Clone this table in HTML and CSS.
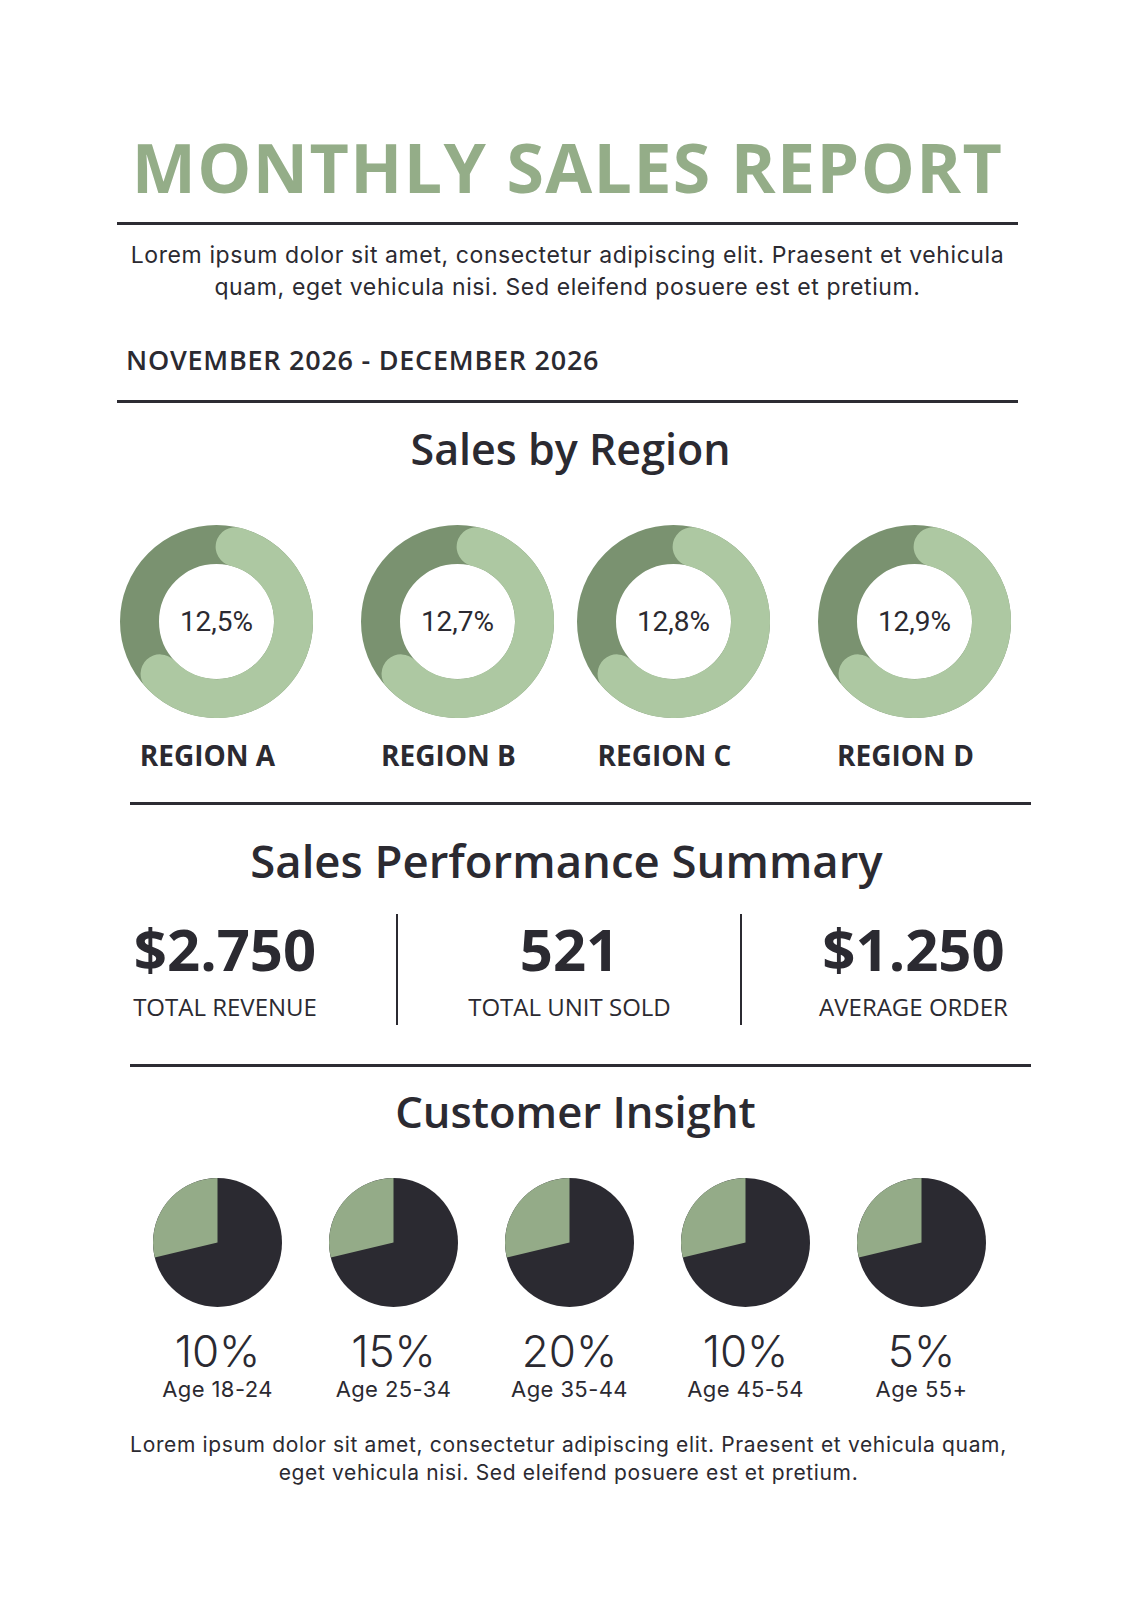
FILE: index.html
```html
<!DOCTYPE html>
<html lang="en">
<head>
<meta charset="utf-8">
<title>Monthly Sales Report</title>
<link rel="stylesheet" href="styles.css">
</head>
<body>
<main class="page">
  <header class="hero">
    <h1 class="title">MONTHLY SALES REPORT</h1>
    <hr class="rule rule-wide rule-title">
    <p class="intro">Lorem ipsum dolor sit amet, consectetur adipiscing elit. Praesent et vehicula<br>quam, eget vehicula nisi. Sed eleifend posuere est et pretium.</p>
    <p class="period">NOVEMBER 2026 - DECEMBER 2026</p>
    <hr class="rule rule-wide rule-period">
  </header>

  <section class="regions">
    <h2 class="heading heading-region">Sales by Region</h2>
    <div class="donut-row">
      <div class="donut-pair">
        <figure class="region">
          <div class="donut">
            <svg class="donut-svg" viewBox="0 0 193 193"><circle class="ring-base" cx="96.5" cy="96.5" r="77"/><circle class="ring-arc" cx="96.5" cy="96.5" r="77" stroke-dasharray="286 1000" transform="rotate(-76 96.5 96.5)"/></svg>
            <span class="donut-value">12,5%</span>
          </div>
          <figcaption class="region-name">REGION A</figcaption>
        </figure>
        <figure class="region">
          <div class="donut">
            <svg class="donut-svg" viewBox="0 0 193 193"><circle class="ring-base" cx="96.5" cy="96.5" r="77"/><circle class="ring-arc" cx="96.5" cy="96.5" r="77" stroke-dasharray="286 1000" transform="rotate(-76 96.5 96.5)"/></svg>
            <span class="donut-value">12,7%</span>
          </div>
          <figcaption class="region-name">REGION B</figcaption>
        </figure>
      </div>
      <div class="donut-pair">
        <figure class="region">
          <div class="donut">
            <svg class="donut-svg" viewBox="0 0 193 193"><circle class="ring-base" cx="96.5" cy="96.5" r="77"/><circle class="ring-arc" cx="96.5" cy="96.5" r="77" stroke-dasharray="286 1000" transform="rotate(-76 96.5 96.5)"/></svg>
            <span class="donut-value">12,8%</span>
          </div>
          <figcaption class="region-name">REGION C</figcaption>
        </figure>
        <figure class="region">
          <div class="donut">
            <svg class="donut-svg" viewBox="0 0 193 193"><circle class="ring-base" cx="96.5" cy="96.5" r="77"/><circle class="ring-arc" cx="96.5" cy="96.5" r="77" stroke-dasharray="286 1000" transform="rotate(-76 96.5 96.5)"/></svg>
            <span class="donut-value">12,9%</span>
          </div>
          <figcaption class="region-name">REGION D</figcaption>
        </figure>
      </div>
    </div>
  </section>

  <hr class="rule rule-shift rule-regions">

  <section class="summary">
    <h2 class="heading heading-summary">Sales Performance Summary</h2>
    <div class="stats">
      <div class="stat">
        <div class="stat-value">$2.750</div>
        <div class="stat-label">TOTAL REVENUE</div>
      </div>
      <div class="stat stat-divided">
        <div class="stat-value">521</div>
        <div class="stat-label">TOTAL UNIT SOLD</div>
      </div>
      <div class="stat stat-divided">
        <div class="stat-value">$1.250</div>
        <div class="stat-label">AVERAGE ORDER</div>
      </div>
    </div>
  </section>

  <hr class="rule rule-shift rule-summary">

  <section class="insight">
    <h2 class="heading heading-insight">Customer Insight</h2>
    <div class="pie-row">
      <figure class="age">
        <svg class="pie" viewBox="0 0 129 129"><circle class="pie-base" cx="64.5" cy="64.5" r="64.5"/><path class="pie-slice" d="M64.5 64.5 L1.78 79.55 A64.5 64.5 0 0 1 64.5 0 Z"/></svg>
        <div class="age-pct">10%</div>
        <figcaption class="age-label">Age 18-24</figcaption>
      </figure>
      <figure class="age">
        <svg class="pie" viewBox="0 0 129 129"><circle class="pie-base" cx="64.5" cy="64.5" r="64.5"/><path class="pie-slice" d="M64.5 64.5 L1.78 79.55 A64.5 64.5 0 0 1 64.5 0 Z"/></svg>
        <div class="age-pct">15%</div>
        <figcaption class="age-label">Age 25-34</figcaption>
      </figure>
      <figure class="age">
        <svg class="pie" viewBox="0 0 129 129"><circle class="pie-base" cx="64.5" cy="64.5" r="64.5"/><path class="pie-slice" d="M64.5 64.5 L1.78 79.55 A64.5 64.5 0 0 1 64.5 0 Z"/></svg>
        <div class="age-pct">20%</div>
        <figcaption class="age-label">Age 35-44</figcaption>
      </figure>
      <figure class="age">
        <svg class="pie" viewBox="0 0 129 129"><circle class="pie-base" cx="64.5" cy="64.5" r="64.5"/><path class="pie-slice" d="M64.5 64.5 L1.78 79.55 A64.5 64.5 0 0 1 64.5 0 Z"/></svg>
        <div class="age-pct">10%</div>
        <figcaption class="age-label">Age 45-54</figcaption>
      </figure>
      <figure class="age">
        <svg class="pie" viewBox="0 0 129 129"><circle class="pie-base" cx="64.5" cy="64.5" r="64.5"/><path class="pie-slice" d="M64.5 64.5 L1.78 79.55 A64.5 64.5 0 0 1 64.5 0 Z"/></svg>
        <div class="age-pct">5%</div>
        <figcaption class="age-label">Age 55+</figcaption>
      </figure>
    </div>
    <p class="outro">Lorem ipsum dolor sit amet, consectetur adipiscing elit. Praesent et vehicula quam,<br>eget vehicula nisi. Sed eleifend posuere est et pretium.</p>
  </section>
</main>
</body>
</html>
```

FILE: styles.css
```css
* { box-sizing: border-box; }

html, body {
  margin: 0;
  padding: 0;
  background: #ffffff;
}

body {
  color: #2b2a31;
  font-family: "Inter", "Noto Sans", sans-serif;
}

.page {
  width: 1131px;
  min-height: 1600px;
  padding-top: 127px;
}

/* ---------- header ---------- */
.title {
  margin: 0;
  font-family: "Open Sans", "Liberation Sans", sans-serif;
  font-weight: 700;
  font-size: 68px;
  line-height: 80px;
  letter-spacing: 1.4px;
  color: #94ad88;
  text-align: center;
  padding-left: 4px;
}

.rule {
  display: block;
  height: 0;
  margin: 0;
  border: 0;
  border-top: 3px solid #2d2c33;
}

.rule-wide {
  margin-left: 117px;
  width: 901px;
}

.rule-shift {
  margin-left: 130px;
  width: 901px;
}

.rule-title { margin-top: 15px; }

.intro {
  margin: 14px 0 0;
  font-size: 23px;
  line-height: 32px;
  letter-spacing: 0.6px;
  text-align: center;
  padding-left: 4px;
}

.period {
  margin: 39px 0 0 126px;
  font-family: "Open Sans", "Liberation Sans", sans-serif;
  font-weight: 600;
  font-size: 27px;
  line-height: 36px;
  letter-spacing: 0.75px;
}

.rule-period { margin-top: 22px; }

/* ---------- headings ---------- */
.heading {
  margin: 0;
  font-family: "Open Sans", "Liberation Sans", sans-serif;
  font-weight: 600;
  text-align: center;
  color: #2b2a31;
}

.heading-region {
  margin-top: 18px;
  font-size: 43px;
  line-height: 56px;
  padding-left: 10px;
}

.heading-summary {
  margin-top: 25px;
  font-size: 45.5px;
  line-height: 60px;
  padding-left: 2px;
}

.heading-insight {
  margin-top: 16px;
  font-size: 43.6px;
  line-height: 56px;
  padding-left: 20px;
}

/* ---------- regions ---------- */
.donut-row {
  display: flex;
  gap: 23px;
  margin: 48px 0 0 120px;
}

.donut-pair {
  display: flex;
  gap: 48px;
}

.region {
  margin: 0;
  width: 193px;
}

.donut {
  display: grid;
  width: 193px;
  height: 193px;
}

.donut-svg,
.donut-value {
  grid-area: 1 / 1;
}

.donut-svg {
  width: 193px;
  height: 193px;
  display: block;
}

.ring-base {
  fill: none;
  stroke: #7a9270;
  stroke-width: 39;
}

.ring-arc {
  fill: none;
  stroke: #adc8a2;
  stroke-width: 39;
  stroke-linecap: round;
}

.donut-value {
  align-self: center;
  justify-self: center;
  font-family: "Roboto", "Liberation Sans", sans-serif;
  font-size: 28px;
  color: #2b2a31;
}

.region-name {
  margin-top: 20px;
  padding-right: 18px;
  font-family: "Open Sans", "Liberation Sans", sans-serif;
  font-weight: 700;
  font-size: 28px;
  line-height: 34px;
  text-align: center;
  white-space: nowrap;
}

.rule-regions { margin-top: 30px; }

/* ---------- summary ---------- */
.stats {
  display: grid;
  grid-template-columns: 344px 344px 344px;
  margin: 24px 0 0 53px;
}

.stat {
  text-align: center;
  padding-bottom: 3px;
}

.stat-divided {
  border-left: 2px solid #2b2a31;
  margin-left: -1px;
}

.stat-value {
  margin-top: 3px;
  font-family: "Open Sans", "Liberation Sans", sans-serif;
  font-weight: 700;
  font-size: 58px;
  line-height: 64px;
}

.stat-label {
  margin-top: 11px;
  font-family: "Open Sans", "Liberation Sans", sans-serif;
  font-weight: 500;
  font-size: 24px;
  line-height: 30px;
}

.rule-summary { margin-top: 39px; }

/* ---------- insight ---------- */
.pie-row {
  display: flex;
  gap: 47px;
  margin: 39px 0 0 153px;
}

.age {
  margin: 0;
  width: 129px;
  display: flex;
  flex-direction: column;
  align-items: center;
}

.pie {
  width: 129px;
  height: 129px;
  display: block;
}

.pie-base { fill: #2b2a31; }
.pie-slice { fill: #94ab88; }

.age-pct {
  margin-top: 22px;
  font-weight: 300;
  font-size: 44px;
  line-height: 44px;
  white-space: nowrap;
}

.age-label {
  margin-top: 3px;
  font-size: 22px;
  line-height: 26px;
  letter-spacing: 0.4px;
  font-weight: 400;
  white-space: nowrap;
}

.outro {
  margin: 29px 0 0;
  font-size: 21px;
  line-height: 28px;
  letter-spacing: 0.65px;
  text-align: center;
  padding-left: 6px;
}
```
